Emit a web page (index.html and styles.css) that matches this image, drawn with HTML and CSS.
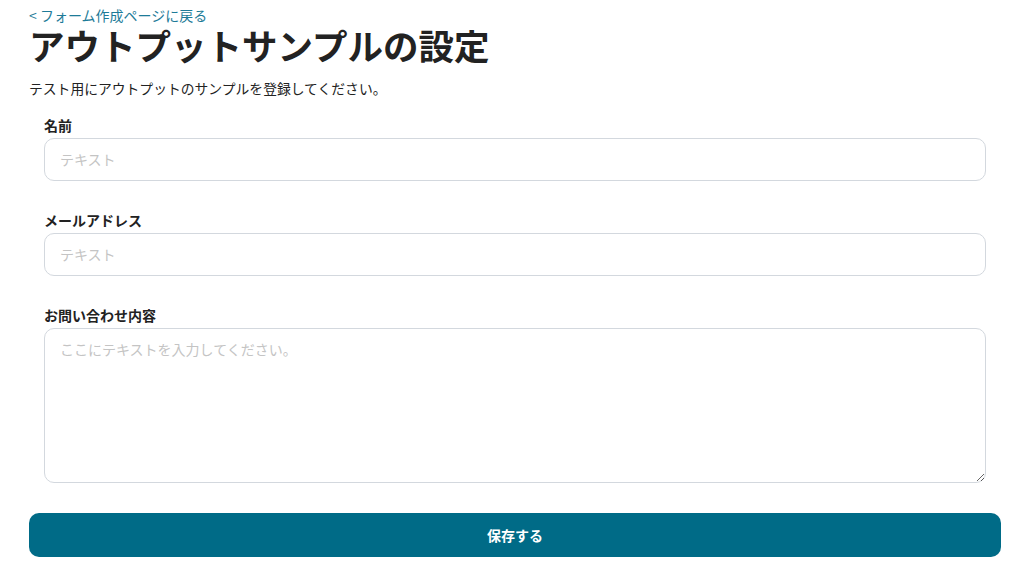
FILE: index.html
```html
<html>
    <head>
        <title>アウトプットサンプルの設定</title>
        <link rel="stylesheet" href="styles.css">
    </head>
    <body>
        <div class="page">
            <a class="back" href="#">&lt; フォーム作成ページに戻る</a>
            <h1 class="title">アウトプットサンプルの設定</h1>
            <p class="lead">テスト用にアウトプットのサンプルを登録してください。</p>

            <form class="sampleForm">
                <div class="field">
                    <label for="name">名前</label>
                    <input type="text" id="name" placeholder="テキスト">
                </div>
                <div class="field">
                    <label for="mail">メールアドレス</label>
                    <input type="text" id="mail" placeholder="テキスト">
                </div>
                <div class="field">
                    <label for="body">お問い合わせ内容</label>
                    <textarea id="body" placeholder="ここにテキストを入力してください。"></textarea>
                </div>
                <button type="button" class="save">保存する</button>
            </form>
        </div>
    </body>
</html>
```

FILE: styles.css
```css
html, body {
    margin: 0;
    padding: 0;
    background: #fff;
}
body {
    font-family: "Noto Sans CJK JP", "Noto Sans", sans-serif;
    color: #222;
}
.page {
    padding: 6px 23px 0 29px;
}
.back {
    display: block;
    font-size: 14px;
    line-height: 18px;
    color: #1d7b98;
    text-decoration: none;
}
.title {
    margin: 0;
    font-size: 35.5px;
    line-height: 42px;
    font-weight: bold;
    color: #222;
}
.lead {
    margin: 13px 0 0;
    font-size: 13.8px;
    line-height: 18px;
}
.sampleForm {
    margin-top: 18px;
}
.field {
    margin: 0 15px;
}
.field + .field {
    margin-top: 29px;
}
label {
    display: block;
    font-size: 14px;
    font-weight: bold;
    line-height: 20px;
    margin-bottom: 3px;
}
input[type=text], textarea {
    display: block;
    width: 100%;
    box-sizing: border-box;
    border: 1px solid #d3d8de;
    border-radius: 10px;
    padding: 0 15px;
    font-family: inherit;
    font-size: 14px;
    color: #222;
    background: #fff;
    outline: none;
}
input[type=text] {
    height: 43px;
    padding-bottom: 2px;
}
textarea {
    height: 155px;
    padding-top: 10px;
    resize: vertical;
}
::placeholder {
    color: #c4c4c4;
}
.save {
    display: block;
    width: 100%;
    height: 44px;
    margin-top: 30px;
    border: none;
    border-radius: 10px;
    background: #006b87;
    color: #fff;
    font-family: inherit;
    font-size: 14px;
    font-weight: bold;
    cursor: pointer;
}
```
